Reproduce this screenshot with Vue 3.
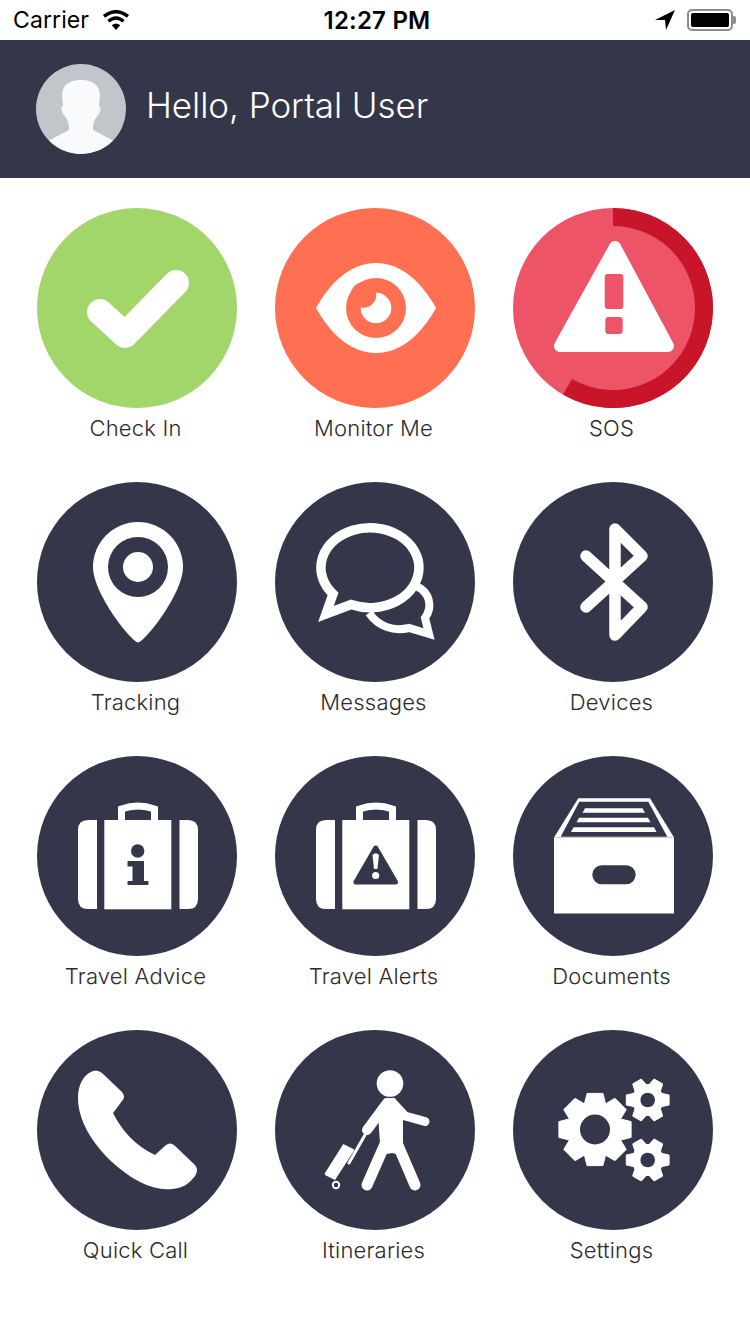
<script setup>
const items = [
  { label: 'Check In', icon: 'check', bg: '#a3d66a' },
  { label: 'Monitor Me', icon: 'eye', bg: '#ff7052' },
  { label: 'SOS', icon: 'sos', bg: '#ee5468' },
  { label: 'Tracking', icon: 'pin', bg: '#34374a' },
  { label: 'Messages', icon: 'chat', bg: '#34374a' },
  { label: 'Devices', icon: 'bluetooth', bg: '#34374a' },
  { label: 'Travel Advice', icon: 'advice', bg: '#34374a' },
  { label: 'Travel Alerts', icon: 'alerts', bg: '#34374a' },
  { label: 'Documents', icon: 'box', bg: '#34374a' },
  { label: 'Quick Call', icon: 'phone', bg: '#34374a' },
  { label: 'Itineraries', icon: 'walker', bg: '#34374a' },
  { label: 'Settings', icon: 'gears', bg: '#34374a' }
]

// builds a toothed wheel outline, first tooth pointing right
function gear(cx, cy, outer, root, teeth, tip) {
  const step = (Math.PI * 2) / teeth
  const pts = []
  for (let i = 0; i < teeth; i++) {
    const a = i * step
    const tipA = tip / outer
    const baseA = (tip * 1.35) / root
    const list = [
      [root, a - baseA],
      [outer, a - tipA],
      [outer, a + tipA],
      [root, a + baseA]
    ]
    for (const [r, t] of list) {
      pts.push((cx + r * Math.cos(t)).toFixed(1) + ' ' + (cy + r * Math.sin(t)).toFixed(1))
    }
  }
  return 'M' + pts.join('L') + 'Z'
}

const bigGear = gear(82, 99.5, 37, 28, 8, 8)
const topGear = gear(134.7, 70, 22, 15.5, 6, 5)
const lowGear = gear(134.7, 130, 22, 15.5, 6, 5)
</script>

<template>
  <div class="screen">
    <div class="status">
      <div class="status-left">
        <span class="carrier">Carrier</span>
        <svg class="wifi" viewBox="0 0 28 20" width="28" height="20">
          <path d="M14 20 L9.8 15.2 Q14 11.8 18.2 15.2Z" fill="#000" />
          <path d="M6.4 11.2 Q14 4.6 21.6 11.2" fill="none" stroke="#000" stroke-width="3.4" />
          <path d="M2 6.4 Q14 -3 26 6.4" fill="none" stroke="#000" stroke-width="3.4" />
        </svg>
      </div>
      <div class="time">12:27 PM</div>
      <div class="status-right">
        <svg class="arrow" viewBox="0 0 20 20" width="20" height="20">
          <path d="M20 0 L0 10 L10 10 L11 20Z" fill="#000" />
        </svg>
        <div class="battery">
          <div class="battery-fill"></div>
        </div>
        <div class="battery-nub"></div>
      </div>
    </div>

    <div class="header">
      <svg class="avatar" viewBox="0 0 90 90" width="90" height="90">
        <rect width="90" height="90" fill="#c2c6cb" />
        <path
          d="M45 16 C32 16 26 22 26 32 L27 42 L25 44 L27 50 L31 55 L33 62 L33 66 L12 77 L12 90 L78 90 L78 77 L57 66 L57 62 L59 55 L63 50 L65 44 L63 42 L64 32 C64 22 58 16 45 16Z"
          fill="#f8fafc"
        />
      </svg>
      <div class="greeting">Hello, Portal User</div>
    </div>

    <div class="grid">
      <div v-for="item in items" :key="item.label" class="cell">
        <svg class="disc" viewBox="0 0 200 200" width="200" height="200">
          <circle cx="100" cy="100" r="100" :fill="item.bg" />

          <polyline
            v-if="item.icon === 'check'"
            points="63,104 88,127 139,75"
            fill="none"
            stroke="#fff"
            stroke-width="26"
            stroke-linecap="round"
            stroke-linejoin="round"
          />

          <g v-else-if="item.icon === 'eye'">
            <path d="M41 100 C55 75 75 55 101 55 C127 55 147 75 161 100 C147 125 127 145 101 145 C75 145 55 125 41 100Z" fill="#fff" />
            <circle cx="101" cy="100" r="30" fill="#ff7052" />
            <circle cx="101" cy="100" r="15.3" fill="#fff" />
            <circle cx="88.5" cy="87" r="12.7" fill="#ff7052" />
          </g>

          <g v-else-if="item.icon === 'sos'">
            <path d="M100 0 A100 100 0 1 1 50 186.6 L59 171 A82 82 0 1 0 100 18Z" fill="#c8152a" />
            <path d="M102 39 L47 138 L155 138Z" fill="#fff" stroke="#fff" stroke-width="12" stroke-linejoin="round" />
            <rect x="91.7" y="66" width="18.6" height="35" rx="3" fill="#ee5468" />
            <rect x="92.3" y="109" width="17.4" height="17" rx="3" fill="#ee5468" />
          </g>

          <g v-else-if="item.icon === 'pin'">
            <path d="M101 160.5 C95 160.5 56 112 56 85 A45 45 0 0 1 146 85 C146 112 107 160.5 101 160.5Z" fill="#fff" />
            <circle cx="101" cy="85" r="30" fill="#34374a" />
            <circle cx="101" cy="85" r="15" fill="#fff" />
          </g>

          <g v-else-if="item.icon === 'chat'" fill="none" stroke="#fff" stroke-miterlimit="8">
            <path d="M141 104 C155 110 158 125 150 136 L154 152 L134 146 C118 150 103 144 94 131" stroke-width="8" />
            <path d="M58 112 L51 132 L76 122.6 A49 40 0 1 0 58 112Z" stroke-width="9.5" />
          </g>

          <path
            v-else-if="item.icon === 'bluetooth'"
            d="M73 74 L129 125 L102 153 L102 47 L129 74 L73 125"
            fill="none"
            stroke="#fff"
            stroke-width="11.5"
            stroke-linecap="round"
            stroke-linejoin="round"
          />

          <g v-else-if="item.icon === 'advice' || item.icon === 'alerts'">
            <path d="M60 64 L60 153 L51 153 Q41 153 41 143 L41 74 Q41 64 51 64Z" fill="#fff" />
            <rect x="67.3" y="64" width="67" height="89.3" fill="#fff" />
            <path d="M142.5 64 L151 64 Q161 64 161 74 L161 143 Q161 153 151 153 L142.5 153Z" fill="#fff" />
            <path d="M84.5 65 L84.5 53 Q101 47 117.5 53 L117.5 65" fill="none" stroke="#fff" stroke-width="7" />
            <template v-if="item.icon === 'advice'">
              <circle cx="100.7" cy="95" r="6.7" fill="#34374a" />
              <rect x="90.5" y="105" width="16.5" height="5.5" fill="#34374a" />
              <rect x="95.5" y="105" width="11.5" height="22" fill="#34374a" />
              <rect x="90.5" y="125" width="21" height="4" rx="1" fill="#34374a" />
            </template>
            <template v-else>
              <path d="M100.7 92 L81 126 L120.5 126Z" fill="#34374a" stroke="#34374a" stroke-width="5" stroke-linejoin="round" />
              <path d="M97.5 99 Q100.7 95.5 104 99 L102.4 113 L99 113Z" fill="#fff" />
              <circle cx="100.7" cy="119.5" r="3.6" fill="#fff" />
            </template>
          </g>

          <g v-else-if="item.icon === 'box'" fill="#fff">
            <path d="M41 81.5 L65.3 42.3 L137 42.3 L161 81.5Z" />
            <path d="M47.7 80.7 L66.3 45.7 L135.3 45.7 L154.3 80.7Z" fill="#34374a" />
            <path d="M72 52.3 L129.5 52.3 L132 56.7 L69.5 56.7Z" />
            <path d="M66 61.8 L135 61.8 L137.5 66.3 L63.5 66.3Z" />
            <path d="M60.5 71.3 L141 71.3 L143.5 76 L58 76Z" />
            <rect x="41" y="81.5" width="120" height="76" />
            <rect x="79.3" y="109.3" width="43.4" height="19" rx="9.5" fill="#34374a" />
          </g>

          <path
            v-else-if="item.icon === 'phone'"
            d="M52 43 Q59 38 65 43 L85 62 Q89 67 85 71 L76 83 C84 100 100 117 118 125 L129 115 Q133 112 137 115 L158 135 Q162 140 158 146 C152 154 146 158 135 159 C115 161 95 150 75 132 C55 113 41 90 41 68 C41 55 46 47 52 43Z"
            fill="#fff"
          />

          <g v-else-if="item.icon === 'walker'">
            <circle cx="115" cy="53.5" r="13.3" fill="#fff" />
            <path d="M110 68 L120 68 L128 85 L128 113 L121 124 L117 123 L112 124 L105 113 L103 85Z" fill="#fff" />
            <g fill="none" stroke="#fff" stroke-linecap="round" stroke-linejoin="round">
              <polyline points="118,73 130,86 150,91.5" stroke-width="9" />
              <polyline points="112,73 92,100" stroke-width="10" />
              <polyline points="110.5,113 92,155" stroke-width="11" />
              <polyline points="122,113 140,155" stroke-width="11" />
              <line x1="90" y1="105" x2="74" y2="133" stroke-width="3" />
            </g>
            <path d="M68.3 114 L78.3 119 Q79.5 120 78.8 121 L60 150 L50 145 Q49.5 144 50 143Z" fill="#fff" />
            <circle cx="61" cy="155" r="3.2" fill="#34374a" stroke="#fff" stroke-width="2" />
          </g>

          <g v-else-if="item.icon === 'gears'" fill="#fff" stroke="#fff" stroke-width="1" stroke-linejoin="round">
            <path :d="bigGear" />
            <circle cx="82" cy="99.5" r="15" fill="#34374a" stroke="none" />
            <path :d="topGear" />
            <circle cx="134.7" cy="70" r="7.3" fill="#34374a" stroke="none" />
            <path :d="lowGear" />
            <circle cx="134.7" cy="130" r="7.3" fill="#34374a" stroke="none" />
          </g>
        </svg>
        <div class="label">{{ item.label }}</div>
      </div>
    </div>
  </div>
</template>

<style scoped>
.screen {
  width: 750px;
  height: 1334px;
  background: #fff;
  font-family: Inter, "Liberation Sans", sans-serif;
  overflow: hidden;
}

.status {
  height: 40px;
  padding: 0 14px 0 13px;
  display: grid;
  grid-template-columns: 1fr auto 1fr;
  align-items: center;
  color: #000;
}

.status-left {
  display: flex;
  align-items: center;
  gap: 13px;
}

.carrier {
  font-size: 23px;
  letter-spacing: 0.1px;
}

.time {
  margin-left: 5px;
  font-size: 24px;
  font-weight: 600;
  letter-spacing: 0.2px;
}

.status-right {
  display: flex;
  justify-content: flex-end;
  align-items: center;
}

.arrow {
  margin-right: 12px;
}

.battery {
  width: 46px;
  height: 22px;
  padding: 2px;
  box-sizing: border-box;
  border: 2px solid #8e8e8e;
  border-radius: 5px;
}

.battery-fill {
  height: 100%;
  background: #000;
  border-radius: 2px;
}

.battery-nub {
  width: 3px;
  height: 8px;
  background: #8e8e8e;
  border-radius: 0 2px 2px 0;
}

.header {
  height: 138px;
  padding-left: 36px;
  display: flex;
  align-items: center;
  gap: 20px;
  background: #34374a;
}

.avatar {
  border-radius: 50%;
}

.greeting {
  margin-bottom: 8px;
  font-size: 35px;
  font-weight: 300;
  letter-spacing: -0.05px;
  color: #fff;
}

.grid {
  padding: 30px 18px 0;
  display: grid;
  grid-template-columns: repeat(3, 238px);
  grid-auto-rows: 274px;
}

.cell {
  display: flex;
  flex-direction: column;
  align-items: center;
}

.disc {
  display: block;
}

.label {
  margin: 7px 3px 0 0;
  font-size: 22px;
  font-weight: 350;
  letter-spacing: 0.2px;
  line-height: 27px;
  color: #2b2b2b;
}
</style>
